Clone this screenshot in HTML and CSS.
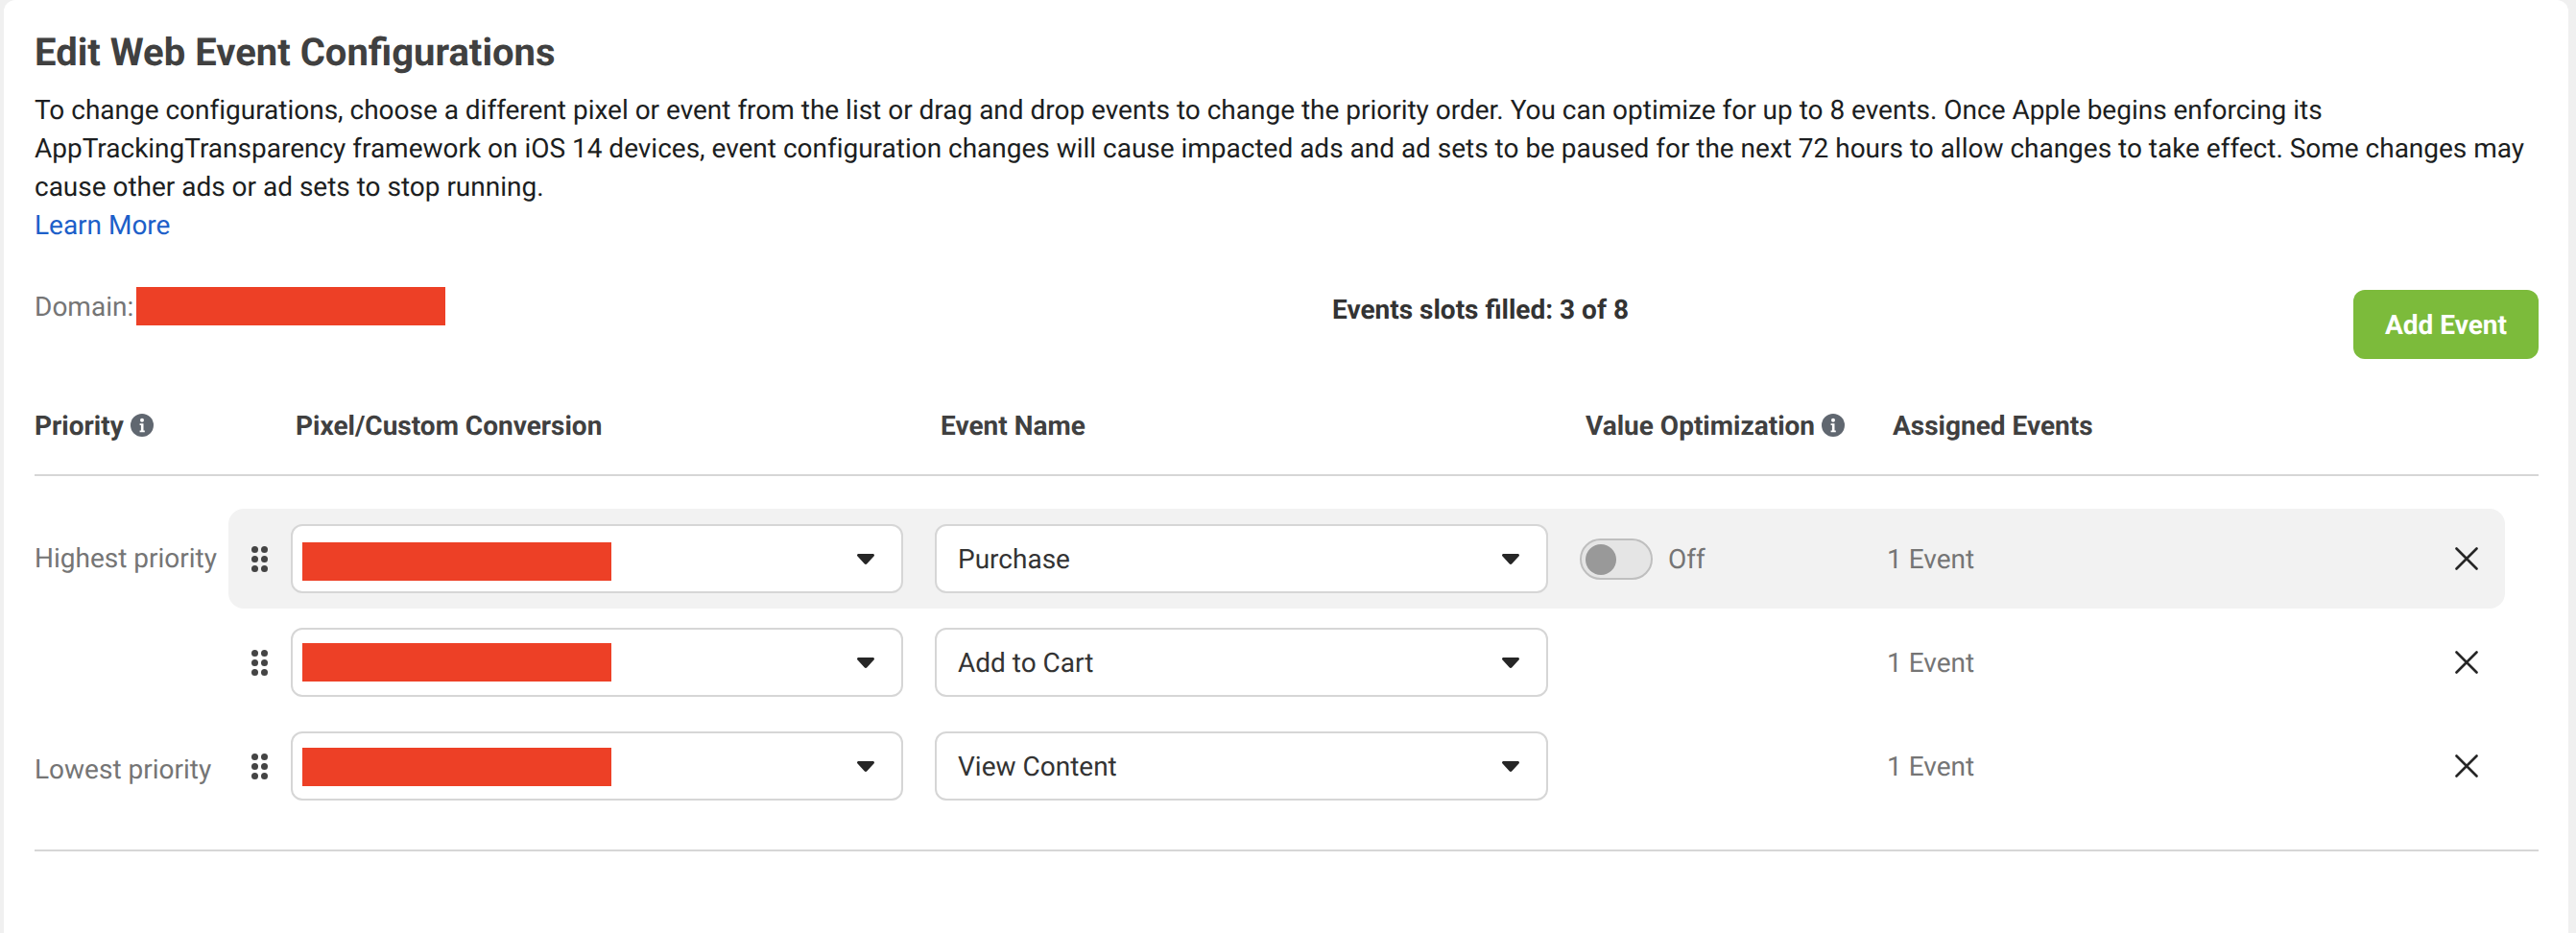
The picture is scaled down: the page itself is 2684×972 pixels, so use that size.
FILE: index.html
```html
<!DOCTYPE html>
<html lang="en">
<head>
<meta charset="utf-8">
<title>Edit Web Event Configurations</title>
<link rel="stylesheet" href="styles.css">
</head>
<body>
<main class="card">
  <h1 class="title">Edit Web Event Configurations</h1>
  <p class="intro">To change configurations, choose a different pixel or event from the list or drag and drop events to change the priority order. You can optimize for up to 8 events. Once Apple begins enforcing its AppTrackingTransparency framework on iOS 14 devices, event configuration changes will cause impacted ads and ad sets to be paused for the next 72 hours to allow changes to take effect. Some changes may cause other ads or ad sets to stop running.<br><a class="link" href="#">Learn More</a></p>

  <div class="summary">
    <div class="domain"><span>Domain:</span><span class="redact"></span></div>
    <div class="slots">Events slots filled: 3 of 8</div>
    <button class="add" type="button">Add Event</button>
  </div>

  <div class="head">
    <div class="head-cell">Priority <svg class="info" viewBox="0 0 24 24"><circle cx="12" cy="12" r="12" fill="#606770"/><circle cx="12" cy="6.8" r="2" fill="#fff"/><path d="M9.6 10.2h3.9v7.2h1.3v1.8H9.6v-1.8h1.3v-5.4H9.6z" fill="#fff"/></svg></div>
    <div class="head-cell">Pixel/Custom Conversion</div>
    <div class="head-cell">Event Name</div>
    <div class="head-cell">Value Optimization <svg class="info" viewBox="0 0 24 24"><circle cx="12" cy="12" r="12" fill="#606770"/><circle cx="12" cy="6.8" r="2" fill="#fff"/><path d="M9.6 10.2h3.9v7.2h1.3v1.8H9.6v-1.8h1.3v-5.4H9.6z" fill="#fff"/></svg></div>
    <div class="head-cell">Assigned Events</div>
  </div>

  <div class="rows">
    <div class="line">
      <div class="prio prio-high">Highest priority</div>
      <div class="row row-active">
        <svg class="grip" viewBox="0 0 17 27"><g fill="#444"><circle cx="3.5" cy="3.5" r="3.5"/><circle cx="13.5" cy="3.5" r="3.5"/><circle cx="3.5" cy="13.5" r="3.5"/><circle cx="13.5" cy="13.5" r="3.5"/><circle cx="3.5" cy="23.5" r="3.5"/><circle cx="13.5" cy="23.5" r="3.5"/></g></svg>
        <div class="select select-pixel"><span class="redact redact-first"></span><svg class="caret" viewBox="0 0 18 11"><path d="M1.5 0h15c1.2 0 1.900 1.300 1.200 2.300l-7.300 8c-.7.9-2.100.9-2.800 0l-7.300-8C-.4 1.300.3 0 1.500 0z" fill="#262626"/></svg></div>
        <div class="select select-event"><span>Purchase</span><svg class="caret" viewBox="0 0 18 11"><path d="M1.5 0h15c1.2 0 1.900 1.300 1.200 2.300l-7.300 8c-.7.9-2.100.9-2.800 0l-7.300-8C-.4 1.300.3 0 1.500 0z" fill="#262626"/></svg></div>
        <div class="value"><span class="toggle"><span class="thumb"></span></span><span class="muted">Off</span></div>
        <div class="muted">1 Event</div>
        <svg class="close" viewBox="0 0 24 24"><path d="M1.5 1.5l21 21M22.500 1.500l-21 21" stroke="#262626" stroke-width="2.600" stroke-linecap="round" fill="none"/></svg>
      </div>
    </div>
    <div class="line">
      <div class="prio"></div>
      <div class="row">
        <svg class="grip" viewBox="0 0 17 27"><g fill="#444"><circle cx="3.5" cy="3.5" r="3.5"/><circle cx="13.5" cy="3.5" r="3.5"/><circle cx="3.5" cy="13.5" r="3.5"/><circle cx="13.5" cy="13.5" r="3.5"/><circle cx="3.5" cy="23.5" r="3.5"/><circle cx="13.5" cy="23.5" r="3.5"/></g></svg>
        <div class="select select-pixel"><span class="redact redact-rest"></span><svg class="caret" viewBox="0 0 18 11"><path d="M1.5 0h15c1.2 0 1.900 1.300 1.200 2.300l-7.300 8c-.7.9-2.100.9-2.800 0l-7.300-8C-.4 1.300.3 0 1.500 0z" fill="#262626"/></svg></div>
        <div class="select select-event"><span>Add to Cart</span><svg class="caret" viewBox="0 0 18 11"><path d="M1.5 0h15c1.2 0 1.900 1.300 1.200 2.300l-7.300 8c-.7.9-2.100.9-2.800 0l-7.300-8C-.4 1.300.3 0 1.500 0z" fill="#262626"/></svg></div>
        <div class="value"></div>
        <div class="muted">1 Event</div>
        <svg class="close" viewBox="0 0 24 24"><path d="M1.5 1.5l21 21M22.500 1.500l-21 21" stroke="#262626" stroke-width="2.600" stroke-linecap="round" fill="none"/></svg>
      </div>
    </div>
    <div class="line">
      <div class="prio prio-low">Lowest priority</div>
      <div class="row">
        <svg class="grip" viewBox="0 0 17 27"><g fill="#444"><circle cx="3.5" cy="3.5" r="3.5"/><circle cx="13.5" cy="3.5" r="3.5"/><circle cx="3.5" cy="13.5" r="3.5"/><circle cx="13.5" cy="13.5" r="3.5"/><circle cx="3.5" cy="23.5" r="3.5"/><circle cx="13.5" cy="23.5" r="3.5"/></g></svg>
        <div class="select select-pixel"><span class="redact redact-last"></span><svg class="caret" viewBox="0 0 18 11"><path d="M1.5 0h15c1.2 0 1.900 1.300 1.200 2.300l-7.300 8c-.7.9-2.100.9-2.800 0l-7.300-8C-.4 1.300.3 0 1.500 0z" fill="#262626"/></svg></div>
        <div class="select select-event"><span>View Content</span><svg class="caret" viewBox="0 0 18 11"><path d="M1.5 0h15c1.2 0 1.900 1.300 1.200 2.300l-7.300 8c-.7.9-2.100.9-2.800 0l-7.300-8C-.4 1.300.3 0 1.500 0z" fill="#262626"/></svg></div>
        <div class="value"></div>
        <div class="muted">1 Event</div>
        <svg class="close" viewBox="0 0 24 24"><path d="M1.5 1.5l21 21M22.500 1.500l-21 21" stroke="#262626" stroke-width="2.600" stroke-linecap="round" fill="none"/></svg>
      </div>
    </div>
  </div>
</main>
</body>
</html>
```
FILE: styles.css
```css
* { box-sizing: border-box; }
html, body { height: 100%; }
body {
  margin: 0;
  background: #f0f0f0;
  font-family: Roboto, "Liberation Sans", sans-serif;
  font-size: 28px;
  color: #1c1e21;
  overflow: hidden;
  text-rendering: geometricPrecision;
}
.card {
  height: 100%;
  margin: 0 8px 0 4px;
  padding: 32px 31px 0 32px;
  background: #fff;
  border-radius: 12px 12px 0 0;
}
.title {
  margin: 0;
  font-size: 40px;
  line-height: 46px;
  font-weight: 700;
  color: #404040;
}
.intro {
  margin: 17px 0 0;
  line-height: 40px;
  letter-spacing: -0.012px;
}
.link { color: #1d5fc9; text-decoration: none; }
.summary {
  display: grid;
  grid-template-columns: 1352px 1fr auto;
  align-items: start;
  margin-top: 44px;
}
.domain {
  display: flex;
  align-items: center;
  gap: 3px;
  color: #757575;
  height: 40px;
}
.redact { display: block; width: 322px; height: 40px; background: #ed4026; flex: none; }
.slots { font-weight: 700; color: #333; line-height: 32px; margin-top: 8px; }
.add {
  width: 193px;
  height: 72px;
  margin-top: 3px;
  border: 0;
  border-radius: 12px;
  background: #7cbb3b;
  color: #fff;
  font: 700 28px Roboto, sans-serif;
  text-rendering: geometricPrecision;
}
.head {
  display: grid;
  grid-template-columns: 272px 672px 672px 320px 1fr;
  align-items: center;
  height: 122px;
  padding-top: 18px;
  border-bottom: 2px solid #d6d6d6;
}
.head-cell {
  display: flex;
  align-items: center;
  gap: 7px;
  font-weight: 700;
  color: #404040;
  height: 32px;
}
.info { width: 24px; height: 24px; flex: none; }
.rows {
  display: flex;
  flex-direction: column;
  gap: 4px;
  margin-top: 34px;
  padding-bottom: 35px;
  border-bottom: 2px solid #d6d6d6;
}
.line {
  display: grid;
  grid-template-columns: 202px 2372px;
  align-items: center;
  height: 104px;
}
.prio { color: #757575; white-space: nowrap; }
.prio-high { margin-bottom: 2px; }
.prio-low { margin-top: 6px; }
.row {
  display: grid;
  grid-template-columns: 41px 671px 672px 320px 592px 24px;
  align-items: center;
  height: 104px;
  padding-left: 24px;
  border-radius: 16px;
}
.row-active { background: #f2f2f2; }
.grip { width: 17px; height: 27px; }
.select {
  display: flex;
  align-items: center;
  justify-content: space-between;
  height: 72px;
  padding: 0 28px 0 22px;
  border: 2px solid #d6d6d6;
  border-radius: 12px;
  background: #fff;
  color: #333;
}
.select-pixel { width: 638px; padding-left: 10px; }
.select-event { width: 639px; }
.caret { width: 18px; height: 11px; flex: none; }
.redact-first { margin-top: 6px; }
.redact-last { margin-top: 2px; }
.value { display: flex; align-items: center; gap: 16px; }
.toggle {
  display: block;
  width: 76px;
  height: 43px;
  padding: 4px;
  border: 2px solid #bfbfbf;
  border-radius: 22px;
  background: #e5e5e5;
}
.thumb { display: block; width: 32px; height: 32px; border-radius: 50%; background: #999; }
.muted { color: #757575; }
.close { width: 24px; height: 24px; }
```
